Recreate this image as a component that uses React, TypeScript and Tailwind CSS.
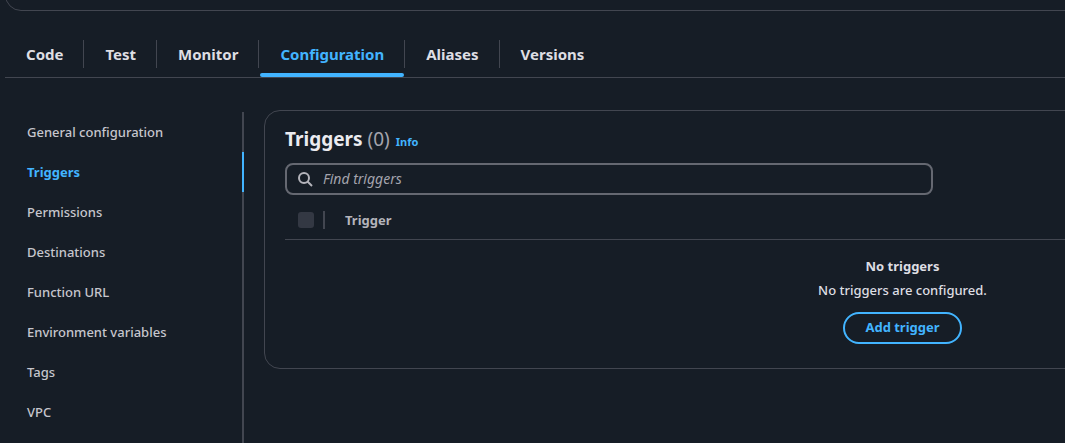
import React from "react";

const tabs = ["Code", "Test", "Monitor", "Configuration", "Aliases", "Versions"];

const sections = [
  "General configuration",
  "Triggers",
  "Permissions",
  "Destinations",
  "Function URL",
  "Environment variables",
  "Tags",
  "VPC",
];

function Tabs() {
  return (
    <nav aria-label="Function" className="flex gap-px border-b border-[#424650] pl-px">
      {tabs.map((tab, i) => {
        const active = tab === "Configuration";
        return (
          <a
            key={tab}
            href={"#" + tab.toLowerCase()}
            aria-current={active ? "page" : undefined}
            className={
              "relative flex h-[47px] flex-col font-bold " +
              (active ? "text-[#42b4ff]" : "text-[#dedee3]")
            }
          >
            <span
              className={
                "mt-[10px] h-7 border-r px-5 text-[15px] leading-7 " +
                (i < tabs.length - 1 ? "border-[#424650]" : "border-transparent")
              }
            >
              {tab}
            </span>
            {active && (
              <span className="absolute bottom-0 left-0 right-px h-1 rounded-[2px] bg-[#42b4ff]" />
            )}
          </a>
        );
      })}
    </nav>
  );
}

function SideNav() {
  return (
    <nav aria-label="Configuration" className="mt-0.5 w-[239px] shrink-0 pb-10 shadow-[inset_-2px_0_0_#424650]">
      <ul>
        {sections.map((name) => {
          const active = name === "Triggers";
          return (
            <li key={name}>
              <a
                href={"#" + name.toLowerCase().replace(/ /g, "-")}
                className={
                  "flex h-10 items-center border-r-2 pl-[22px] pt-px text-[13px] " +
                  (active
                    ? "border-[#42b4ff] font-bold text-[#42b4ff]"
                    : "border-transparent font-medium text-[#c6c6cd]")
                }
              >
                {name}
              </a>
            </li>
          );
        })}
      </ul>
    </nav>
  );
}

function TriggersPanel() {
  return (
    <section className="grow rounded-2xl border border-[#424650] px-5 pb-6 pt-3">
      <div className="flex h-8 items-baseline gap-1.5">
        <h2 className="text-[19px] font-bold leading-8 text-[#ebebf0]">
          Triggers <span className="font-normal text-[#a4a4ad]">(0)</span>
        </h2>
        <a href="#info" className="text-[11px] font-bold text-[#42b4ff]">
          Info
        </a>
      </div>
      <label className="mt-2 flex h-8 w-[648px] items-center gap-2.5 rounded-lg border-2 border-[#656871] px-2.5">
        <svg width="16" height="16" viewBox="0 0 16 16" fill="none" stroke="#b4b4bb" strokeWidth="2" aria-hidden="true">
          <circle cx="7" cy="7" r="5" />
          <path d="m15 15-4.5-4.5" />
        </svg>
        <input
          type="search"
          aria-label="Find triggers"
          placeholder="Find triggers"
          className="min-w-0 grow bg-transparent text-sm italic text-[#dedee3] outline-none placeholder:text-[#a4a4ad]"
        />
      </label>
      <table className="w-full text-[13px]">
        <thead>
          <tr className="h-11 border-b border-[#424650] text-left text-[#b4b4bb]">
            <th className="w-10 p-0 pt-1.5">
              <div className="flex h-[18px] items-center border-r-2 border-[#424650] pl-[13px]">
                <input
                  type="checkbox"
                  disabled
                  aria-label="Select all triggers"
                  className="size-4 appearance-none rounded-[3px] bg-[#333843]"
                />
              </div>
            </th>
            <th className="p-0 pl-5 pt-2 font-bold">Trigger</th>
          </tr>
        </thead>
        <tbody>
          <tr>
            <td colSpan={2} className="p-0 pt-3.5 text-center text-[#dedee3]">
              <p className="font-bold leading-6">No triggers</p>
              <p className="font-medium leading-6">No triggers are configured.</p>
              <button
                type="button"
                className="mt-2.5 h-8 rounded-full border-2 border-[#42b4ff] px-5 font-bold text-[#42b4ff]"
              >
                Add trigger
              </button>
            </td>
          </tr>
        </tbody>
      </table>
    </section>
  );
}

export default function App() {
  return (
    <div className="h-screen overflow-hidden bg-[#161d26] pl-[5px] font-['Noto_Sans',sans-serif]">
      <div className="min-w-[1536px]">
        <div className="h-[11px] overflow-hidden">
          <div className="-mt-9 h-[47px] rounded-2xl border border-[#424650]" />
        </div>
        <main className="pt-[19px]">
          <Tabs />
          <div className="flex items-start gap-5 pt-8">
            <SideNav />
            <TriggersPanel />
          </div>
        </main>
      </div>
    </div>
  );
}
